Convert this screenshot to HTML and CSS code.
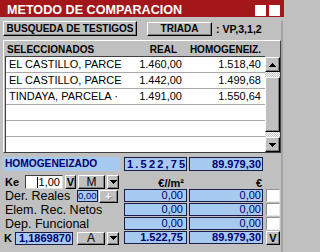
FILE: index.html
```html
<!DOCTYPE html>
<html>
<head>
<meta charset="utf-8">
<title>Metodo de comparacion</title>
<link rel="stylesheet" href="styles.css">
</head>
<body>
<div class="title"><span class="ttext">METODO DE COMPARACION</span><span class="tbtns"><i></i><i></i></span></div>
<div class="main">
  <div class="toolbar">
    <div class="btn b-busq">BUSQUEDA DE TESTIGOS</div>
    <div class="btn b-triada">TRIADA</div>
    <span class="vp">: VP,3,1,2</span>
  </div>
  <div class="list">
    <div class="lhead"><span class="h-name">SELECCIONADOS</span><span class="h-real">REAL</span><span class="h-hom">HOMOGENEIZ.</span></div>
    <div class="lbody">
      <div class="rows">
        <div class="row"><span class="r-name">EL CASTILLO, PARCE</span><span class="r-real">1.460,00</span><span class="r-hom">1.518,40</span></div>
        <div class="row"><span class="r-name">EL CASTILLO, PARCE</span><span class="r-real">1.442,00</span><span class="r-hom">1.499,68</span></div>
        <div class="row"><span class="r-name">TINDAYA, PARCELA ·</span><span class="r-real">1.491,00</span><span class="r-hom">1.550,64</span></div>
        <div class="row"></div>
        <div class="row"></div>
        <div class="row"></div>
      </div>
      <div class="sbar">
        <div class="btn sb"><svg width="7" height="4" viewBox="0 0 7 4"><path d="M3.5 0L7 4H0Z"/></svg></div>
        <div class="chk"></div>
        <div class="btn thumb"></div>
        <div class="chk"></div>
        <div class="btn sb"><svg width="7" height="4" viewBox="0 0 7 4"><path d="M0 0H7L3.5 4Z"/></svg></div>
      </div>
    </div>
  </div>
  <div class="hrow">
    <div class="hlabel">HOMOGENEIZADO</div>
    <div class="box c1 b wide">1.522,75</div>
    <div class="box c2 b">89.979,30</div>
  </div>
  <div class="kerow">
    <div class="left">
      <span class="ke">Ke</span>
      <div class="input"><span class="caret"></span>1,00</div>
      <div class="btn vbtn">V</div>
      <div class="btn mbtn">M</div>
      <div class="btn dd"><svg width="7" height="4" viewBox="0 0 7 4"><path d="M0 0H7L3.5 4Z"/></svg></div>
    </div>
    <div class="c1 hd">€//m²</div>
    <div class="c2 hd">€</div>
  </div>
  <div class="frow">
    <div class="left">
      <span class="lab lab-der">Der. Reales</span>
      <div class="box small">0,00</div>
      <div class="btn plus">+</div>
    </div>
    <div class="box c1">0,00</div>
    <div class="box c2">0,00</div>
    <div class="cb c3"></div>
  </div>
  <div class="frow">
    <div class="left"><span class="lab">Elem. Rec. Netos</span></div>
    <div class="box c1">0,00</div>
    <div class="box c2">0,00</div>
    <div class="cb c3"></div>
  </div>
  <div class="frow">
    <div class="left"><span class="lab">Dep. Funcional</span></div>
    <div class="box c1">0,00</div>
    <div class="box c2">0,00</div>
    <div class="cb c3"></div>
  </div>
  <div class="frow">
    <div class="left">
      <span class="kk">K</span>
      <div class="box kbox b">1,1869870</div>
      <div class="btn abtn">A</div>
      <div class="btn dd"><svg width="7" height="4" viewBox="0 0 7 4"><path d="M0 0H7L3.5 4Z"/></svg></div>
    </div>
    <div class="box c1 b">1.522,75</div>
    <div class="box c2 b">89.979,30</div>
    <div class="btn c3 vchk">V</div>
  </div>
</div>
</body>
</html>
```

FILE: styles.css
```css
* { box-sizing: border-box; }
body {
  margin: 0;
  width: 289px;
  height: 252px;
  overflow: hidden;
  background: #c0c0c0;
  font-family: "Liberation Sans", Arial, sans-serif;
  color: #000;
}
svg { display: block; shape-rendering: crispEdges; }
svg path { fill: #000; }

.title {
  display: flex;
  align-items: flex-start;
  width: 284px;
  height: 17px;
  background: #a3161a;
  color: #fff;
  font-weight: bold;
  font-size: 12.6px;
}
.ttext { margin: 4px 0 0 7px; line-height: 13px; white-space: nowrap; }
.tbtns { display: flex; gap: 3px; margin: 5px 4px 0 auto; }
.tbtns i { display: block; width: 11px; height: 11px; background: #fff; }

.main {
  width: 283px;
  height: 235px;
  border-right: 2px solid #a4a4a4;
}

.btn {
  display: flex;
  align-items: center;
  justify-content: center;
  flex: none;
  background: #c0c0c0;
  border: 1px solid;
  border-color: #fff #000 #000 #fff;
  box-shadow: inset -1px -1px #808080;
  font-weight: bold;
  font-size: 10px;
  white-space: nowrap;
}

.toolbar { display: flex; align-items: center; height: 15px; margin-top: 4px; }
.b-busq { margin-left: 3px; width: 134px; height: 15px; }
.b-triada { margin-left: 10px; width: 65px; height: 14px; }
.vp { margin-left: 4px; font-weight: bold; font-size: 10.6px; white-space: nowrap; }

.list {
  margin: 4px 0 0 3px;
  width: 278px;
  height: 113px;
  border: 1px solid;
  border-color: #fff #404040 #404040 #fff;
}
.lhead {
  display: flex;
  height: 15px;
  padding-top: 2px;
  font-weight: bold;
  font-size: 10px;
  line-height: 13px;
  white-space: nowrap;
}
.h-name { padding-left: 3px; width: 124px; }
.h-real { width: 49px; text-align: right; }
.h-hom { width: 84px; text-align: right; }

.lbody { display: flex; height: 96px; }
.rows {
  margin-left: 1px;
  width: 260px;
  height: 96px;
  overflow: hidden;
  border-left: 1px solid #404040;
  border-top: 1px solid #404040;
  background: #fff;
}
.row {
  display: flex;
  height: 16px;
  border-bottom: 1px solid #a8a8a8;
  font-size: 11px;
  line-height: 14px;
  white-space: nowrap;
}
.r-name { padding-left: 3px; width: 123px; }
.r-real { width: 53px; text-align: right; }
.r-hom { width: 79px; text-align: right; }

.sbar { width: 15px; display: flex; flex-direction: column; padding-top: 1px; }
.sb { height: 15px; }
.chk {
  height: 5px;
  flex: none;
  background: repeating-conic-gradient(#fff 0 25%, #c0c0c0 0 50%) 0 0 / 2px 2px;
}
.thumb { height: 55px; }

.hrow { display: flex; height: 14px; margin-top: 4px; }
.hlabel {
  margin-left: 3px;
  margin-right: 4px;
  width: 117px;
  background: #a6caf0;
  color: #000070;
  font-weight: bold;
  font-size: 10.2px;
  line-height: 14px;
  padding-left: 2px;
  white-space: nowrap;
}

.box {
  flex: none;
  background: #a6caf0;
  border: 1px solid #1c1c48;
  color: #000070;
  font-size: 11px;
  line-height: 11px;
  text-align: right;
  overflow: hidden;
  white-space: nowrap;
}
.b { font-weight: bold; }
.hrow .box { height: 14px; line-height: 12px; }
.wide { text-align: left; padding-left: 2px; letter-spacing: 2.2px; }

.c1 { width: 63px; padding-right: 3px; flex: none; }
.c2 { width: 74px; margin-left: 2px; padding-right: 1px; flex: none; }
.c3 { width: 14px; margin-left: 3px; flex: none; }

.kerow { display: flex; height: 14px; margin-top: 4px; }
.left { width: 124px; flex: none; display: flex; align-items: center; height: 14px; }
.ke { width: 25px; padding-left: 5px; font-weight: bold; font-size: 11px; flex: none; }
.input {
  width: 38px;
  height: 14px;
  flex: none;
  display: flex;
  align-items: center;
  justify-content: flex-end;
  padding-right: 2px;
  background: #fff;
  border: 1px solid;
  border-color: #404040 #e0e0e0 #e0e0e0 #404040;
  font-size: 11px;
}
.caret { width: 1px; height: 11px; background: #000; margin-right: 1px; }
.vbtn { margin-left: 2px; width: 11px; height: 14px; font-size: 11px; }
.mbtn { margin-left: 2px; width: 27px; height: 14px; font-weight: normal; font-size: 12px; }
.dd { margin-left: 2px; width: 12px; height: 14px; }
.hd {
  font-weight: bold;
  font-size: 11px;
  text-align: right;
  line-height: 14px;
  padding-top: 1px;
}

.frow { display: flex; height: 14px; }
.frow .box { height: 13px; }
.lab {
  padding-left: 5px;
  padding-top: 1px;
  font-size: 12.5px;
  line-height: 13px;
  white-space: nowrap;
  align-self: flex-start;
}
.lab-der { width: 77px; flex: none; }
.small {
  width: 21px;
  height: 12px !important;
  font-size: 9.5px;
  line-height: 10px;
  padding-right: 1px;
}
.plus {
  margin-left: 1px;
  width: 19px;
  height: 13px;
  color: #fff;
  font-size: 11px;
  text-shadow: 1px 1px #808080;
}
.cb {
  height: 13px;
  background: #fff;
  border: 1px solid;
  border-color: #909090 #e8e8e8 #e8e8e8 #909090;
}
.kk { margin-left: 4px; width: 11px; font-weight: bold; font-size: 11px; flex: none; }
.kbox { width: 58px; padding-right: 1px; }
.abtn { margin-left: 4px; width: 28px; height: 13px; font-weight: normal; font-size: 12px; }
.frow .dd { height: 13px; }
.vchk { height: 14px; font-size: 11px; }
```
